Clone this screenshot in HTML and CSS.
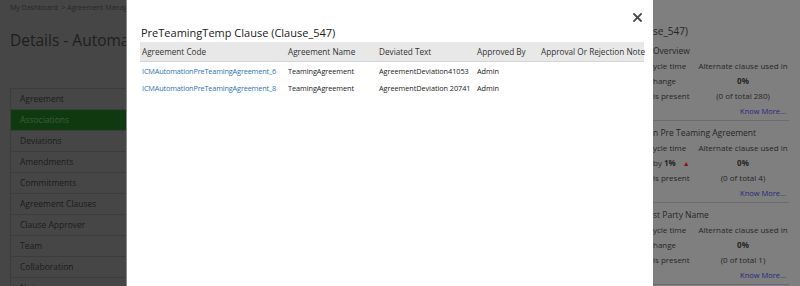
FILE: index.html
```html
<!DOCTYPE html>
<html>
<head>
<meta charset="utf-8">
<link rel="stylesheet" href="styles.css">
</head>
<body>
<div class="page">
  <div class="left">
    <div class="crumbs">My Dashboard &nbsp;&gt; Agreement Management</div>
    <div class="pagetitle">Details - Automation</div>
    <ul class="nav">
      <li>Agreement</li>
      <li class="active">Associations</li>
      <li>Deviations</li>
      <li>Amendments</li>
      <li>Commitments</li>
      <li>Agreement Clauses</li>
      <li>Clause Approver</li>
      <li>Team</li>
      <li>Collaboration</li>
      <li>Notes</li>
    </ul>
  </div>
  <div class="right">
    <div class="rtitle">se_547)</div>
    <div class="block">
      <div class="bhead">Overview</div>
      <div class="grid">
        <span class="lbl">ycle time</span><span class="val">Alternate clause used in</span>
        <span class="lbl">hange</span><span class="val strong">0%</span>
        <span class="lbl">is present</span><span class="val">(0 of total 280)</span>
      </div>
      <div class="more">Know More...</div>
    </div>
    <div class="block">
      <div class="bhead">n Pre Teaming Agreement</div>
      <div class="grid">
        <span class="lbl">ycle time</span><span class="val">Alternate clause used in</span>
        <span class="lbl">by <b>1%</b> <span class="tri">&#9650;</span></span><span class="val strong">0%</span>
        <span class="lbl">is present</span><span class="val">(0 of total 4)</span>
      </div>
      <div class="more">Know More...</div>
    </div>
    <div class="block">
      <div class="bhead">st Party Name</div>
      <div class="grid">
        <span class="lbl">ycle time</span><span class="val">Alternate clause used in</span>
        <span class="lbl">hange</span><span class="val strong">0%</span>
        <span class="lbl">is present</span><span class="val">(0 of total 1)</span>
      </div>
      <div class="more">Know More...</div>
    </div>
  </div>
</div>

<div class="modal">
  <svg class="close" width="9" height="9" viewBox="0 0 9 9"><path d="M1 1 L8 8 M8 1 L1 8" stroke="#4a4a4a" stroke-width="1.8" stroke-linecap="square" fill="none"/></svg>
  <h2 class="mtitle">PreTeamingTemp Clause (Clause_547)</h2>
  <table class="tbl">
    <colgroup>
      <col class="c1"><col class="c2"><col class="c3"><col class="c4"><col class="c5">
    </colgroup>
    <thead>
      <tr><th>Agreement Code</th><th>Agreement Name</th><th>Deviated Text</th><th>Approved By</th><th>Approval Or Rejection Note</th></tr>
    </thead>
    <tbody>
      <tr><td><a class="link">ICMAutomationPreTeamingAgreement_6</a></td><td>TeamingAgreement</td><td>AgreementDeviation41053</td><td>Admin</td><td></td></tr>
      <tr><td><a class="link">ICMAutomationPreTeamingAgreement_8</a></td><td>TeamingAgreement</td><td>AgreementDeviation 20741</td><td>Admin</td><td></td></tr>
    </tbody>
  </table>
</div>
</body>
</html>
```

FILE: styles.css
```css
html, body {
  margin: 0;
  padding: 0;
}
body {
  width: 800px;
  height: 286px;
  overflow: hidden;
  position: relative;
  font-family: "Open Sans", "Noto Sans", sans-serif;
  background: #7f7f7f;
}
.page {
  display: flex;
  height: 286px;
}
.left {
  width: 140px;
  background: #464646;
  padding-left: 10px;
  box-sizing: border-box;
  overflow: hidden;
  white-space: nowrap;
}
.crumbs {
  font-size: 7px;
  color: #262626;
  padding-top: 3px;
  height: 14px;
}
.pagetitle {
  font-size: 15.5px;
  line-height: 22px;
  color: #1e1e1e;
  margin-top: 12px;
  height: 51px;
}
.nav {
  list-style: none;
  margin: 8px 0 0 0;
  padding: 0;
  border-left: 1px solid #3c3c3c;
}
.nav li {
  height: 21px;
  line-height: 20px;
  border-top: 1px solid #3c3c3c;
  box-sizing: border-box;
  padding-left: 9px;
  font-size: 8.5px;
  color: #1c1c1c;
}
.nav li.active {
  background: #0f3a0f;
  color: #3f5c3f;
}
.right {
  margin-left: auto;
  width: 147px;
  box-sizing: border-box;
  white-space: nowrap;
  color: #262626;
}
.rtitle {
  font-size: 10px;
  padding-top: 23px;
  height: 16px;
  line-height: 16px;
}
.block {
  width: 136px;
  border-bottom: 1px solid #6c6c6c;
  padding-top: 4px;
}
.bhead {
  font-size: 8.5px;
  height: 15px;
  line-height: 15px;
}
.grid {
  display: grid;
  grid-template-columns: 44px 92px;
  grid-auto-rows: 15px;
  font-size: 8px;
  line-height: 15px;
}
.val {
  text-align: center;
}
.strong {
  font-weight: bold;
}
.tri {
  color: #8a1010;
  font-size: 7px;
  margin-left: 5px;
}
.more {
  font-size: 7.5px;
  color: #27277e;
  text-align: right;
  line-height: 17px;
  height: 17px;
  padding-right: 3px;
}
.modal {
  position: absolute;
  left: 126px;
  top: 0;
  width: 527px;
  height: 286px;
  background: #fff;
  border-left: 1px solid #8a8a8a;
  box-sizing: border-box;
  padding: 0 9px 0 13px;
}
.close {
  position: absolute;
  right: 11px;
  top: 13px;
}
.mtitle {
  margin: 0;
  padding-top: 24px;
  height: 42px;
  box-sizing: border-box;
  font-size: 11px;
  font-weight: normal;
  line-height: 18px;
  color: #222;
  padding-left: 1px;
}
.tbl {
  border-collapse: collapse;
  table-layout: fixed;
  width: 504px;
  white-space: nowrap;
}
.c1 { width: 146px; }
.c2 { width: 91px; }
.c3 { width: 98px; }
.c4 { width: 64px; }
.c5 { width: 105px; }
.tbl th {
  background: #e8e8e8;
  border-bottom: 1px solid #d6d6d6;
  height: 19px;
  padding: 0 0 0 2px;
  text-align: left;
  font-weight: normal;
  font-size: 8.2px;
  color: #333;
}
.tbl td {
  height: 18px;
  padding: 0 0 0 2px;
  font-size: 7.3px;
  letter-spacing: -0.05px;
  color: #222;
}
.tbl tbody tr:first-child td {
  height: 17px;
}
.link {
  color: #2b73b8;
  letter-spacing: -0.15px;
}
```
